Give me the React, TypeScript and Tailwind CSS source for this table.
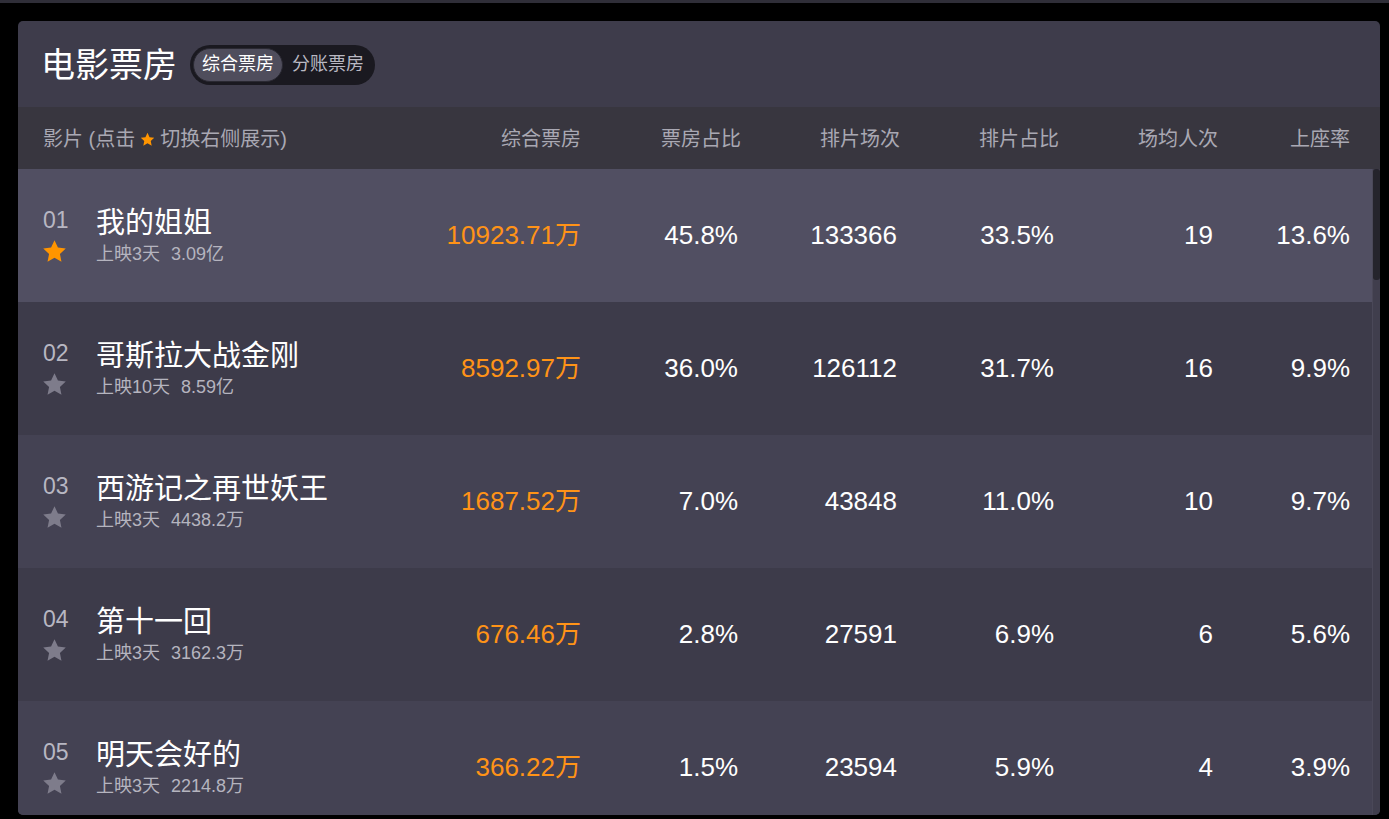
import React from "react";

const FONT = { fontFamily: '"Liberation Sans", "Noto Sans CJK SC", sans-serif' };

function Star({ className }: { className: string }) {
  return (
    <svg viewBox="0 0 24 24" className={className} fill="currentColor">
      <path d="M12 1.2l3.3 7 7.5.9-5.6 5.2 1.5 7.5L12 18.1l-6.7 3.7 1.5-7.5L1.2 9.1l7.5-.9z" />
    </svg>
  );
}

const rows = [
  { rank: "01", title: "我的姐姐", days: "上映3天", total: "3.09亿", box: "10923.71万", share: "45.8%", shows: "133366", showShare: "33.5%", avg: "19", rate: "13.6%", bg: "bg-[#514f62]", active: true },
  { rank: "02", title: "哥斯拉大战金刚", days: "上映10天", total: "8.59亿", box: "8592.97万", share: "36.0%", shows: "126112", showShare: "31.7%", avg: "16", rate: "9.9%", bg: "bg-[#3d3b4a]", active: false },
  { rank: "03", title: "西游记之再世妖王", days: "上映3天", total: "4438.2万", box: "1687.52万", share: "7.0%", shows: "43848", showShare: "11.0%", avg: "10", rate: "9.7%", bg: "bg-[#444253]", active: false },
  { rank: "04", title: "第十一回", days: "上映3天", total: "3162.3万", box: "676.46万", share: "2.8%", shows: "27591", showShare: "6.9%", avg: "6", rate: "5.6%", bg: "bg-[#3d3b4a]", active: false },
  { rank: "05", title: "明天会好的", days: "上映3天", total: "2214.8万", box: "366.22万", share: "1.5%", shows: "23594", showShare: "5.9%", avg: "4", rate: "3.9%", bg: "bg-[#444253]", active: false },
];

export default function App() {
  return (
    <div className="min-h-[819px] w-[1389px] bg-black overflow-hidden" style={FONT}>
      <div className="h-[3px] bg-[#2f2e38]" />
      <div className="ml-[18px] mt-[18px] w-[1362px] h-[794px] rounded-[5px] overflow-hidden bg-[#3e3c4b] flex flex-col">
        {/* Title bar */}
        <div className="h-[86px] shrink-0 flex items-center pl-[23px] pt-[1px]">
          <div className="text-[34px] leading-[40px] text-white">电影票房</div>
          <div className="ml-[13px] h-[40px] rounded-full bg-[#1a1920] flex items-center pl-[3px] pr-[2px]">
            <div className="h-[34px] rounded-full bg-[#4f4d5c] border border-[#2a2932] flex items-center px-[8px] text-[18px] text-white">综合票房</div>
            <div className="h-[34px] flex items-center px-[9px] text-[18px] text-[#b9b8c2]">分账票房</div>
          </div>
        </div>
        {/* Header */}
        <div className="h-[62px] shrink-0 bg-[#38363f] grid grid-cols-[378px_160px_160px_159px_159px_159px_132px] pl-[25px] items-center text-[20px] leading-[28px] text-[#a9a8b3] pt-[2px]">
          <div className="flex items-center">
            影片 (点击
            <Star className="w-[15px] h-[15px] mx-[5px] text-[#ff9500]" />
            切换右侧展示)
          </div>
          <div className="text-right">综合票房</div>
          <div className="text-right">票房占比</div>
          <div className="text-right">排片场次</div>
          <div className="text-right">排片占比</div>
          <div className="text-right">场均人次</div>
          <div className="text-right">上座率</div>
        </div>
        {/* Body */}
        <div className="flex flex-1 min-h-0">
          <div className="flex-1 flex flex-col overflow-hidden">
            {rows.map((r) => (
              <div
                key={r.rank}
                className={`h-[133px] shrink-0 ${r.bg} grid grid-cols-[378px_160px_160px_159px_159px_159px_132px] pl-[25px] items-center`}
              >
                <div className="flex">
                  <div className="w-[53px] flex flex-col mt-[2px]">
                    <div className="text-[23px] leading-[27px] text-[#b8b7c2]">{r.rank}</div>
                    <Star className={`w-[25px] h-[25px] -ml-[1px] mt-[5px] ${r.active ? "text-[#ff9500]" : "text-[#7e7c8b]"}`} />
                  </div>
                  <div className="flex flex-col">
                    <div className="text-[29px] leading-[36px] text-white">{r.title}</div>
                    <div className="text-[18px] leading-[24px] text-[#b5b4bf] mt-[1px]">
                      {r.days}
                      <span className="ml-[11px]">{r.total}</span>
                    </div>
                  </div>
                </div>
                <div className="text-right text-[26px] text-[#ff9317]">{r.box}</div>
                <div className="text-right text-[26px] text-white pr-[3px]">{r.share}</div>
                <div className="text-right text-[26px] text-white pr-[3px]">{r.shows}</div>
                <div className="text-right text-[26px] text-white pr-[5px]">{r.showShare}</div>
                <div className="text-right text-[26px] text-white pr-[5px]">{r.avg}</div>
                <div className="text-right text-[26px] text-white">{r.rate}</div>
              </div>
            ))}
          </div>
          <div className="w-[8px] shrink-0 bg-[#403e4d] border-l border-[#4a4858]">
            <div className="h-[111px] rounded-[3px] bg-[#25242c]" />
          </div>
        </div>
      </div>
    </div>
  );
}
